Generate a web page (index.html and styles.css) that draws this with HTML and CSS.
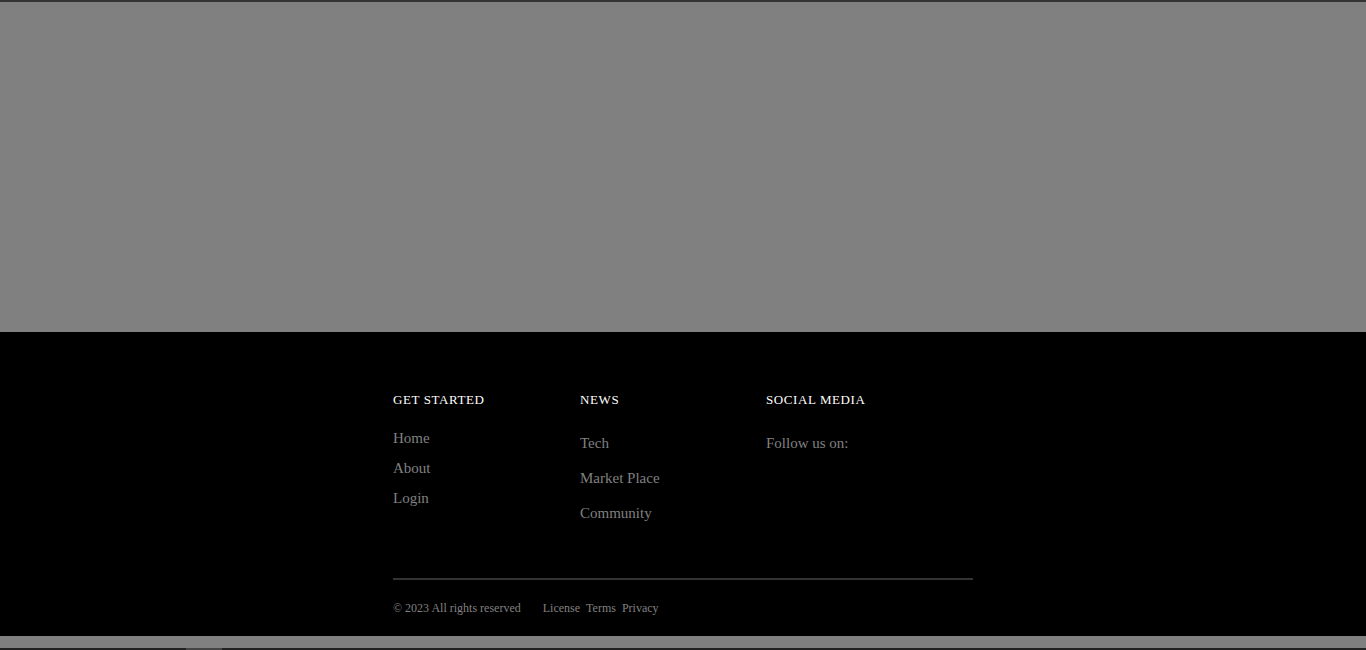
FILE: index.html
```html
<!DOCTYPE html>
<html lang="en">
<head>
    <meta charset="UTF-8">
    <meta name="viewport" content="width=device-width, initial-scale=1.0">
    <title>Footer</title>
    <link rel="stylesheet" href="styles.css">
</head>
<body>
    <div class="hero"></div>

    <footer class="footer">
        <div class="footer-inner">
            <div class="footer-cols">
                <div class="footer-col">
                    <h4>Get Started</h4>
                    <ul class="links links-tight">
                        <li><a href="#">Home</a></li>
                        <li><a href="#">About</a></li>
                        <li><a href="#">Login</a></li>
                    </ul>
                </div>
                <div class="footer-col">
                    <h4>News</h4>
                    <ul class="links">
                        <li><a href="#">Tech</a></li>
                        <li><a href="#">Market Place</a></li>
                        <li><a href="#">Community</a></li>
                    </ul>
                </div>
                <div class="footer-col">
                    <h4>Social Media</h4>
                    <ul class="links">
                        <li>Follow us on:</li>
                    </ul>
                </div>
            </div>

            <div class="footer-bottom">
                <span class="copy">&copy; 2023 All rights reserved</span>
                <div class="legal">
                    <a href="#">License</a>
                    <a href="#">Terms</a>
                    <a href="#">Privacy</a>
                </div>
            </div>
        </div>
    </footer>

    <div class="scrollbar"><div class="thumb"></div></div>
</body>
</html>
```

FILE: styles.css
```css
body {
    margin: 0;
    background-color: #808080;
    border-top: 2px solid #333;
    font-family: "Liberation Serif", "DejaVu Serif", serif;
}
.hero {
    height: 330px;
}
.footer {
    background-color: #000;
    padding: 60px 0 0;
    height: 244px;
}
.footer-inner {
    width: 580px;
    margin: 0 auto;
}
.footer-cols {
    display: grid;
    grid-template-columns: 187px 186px 1fr;
}
.footer-col h4 {
    margin: 0;
    color: #fff;
    font-size: 13px;
    font-weight: normal;
    letter-spacing: 0.6px;
    text-transform: uppercase;
    line-height: 15px;
}
.links {
    list-style: none;
    margin: 19px 0 0;
    padding: 0;
    color: #808080;
    font-size: 15px;
    line-height: 35px;
}
.links-tight {
    margin-top: 16px;
    line-height: 30px;
}
.links a {
    color: #808080;
    text-decoration: none;
}
.footer-bottom {
    margin-top: 47px;
    border-top: 2px solid #333;
    padding-top: 21px;
    display: flex;
    gap: 22px;
    font-size: 12px;
    color: #808080;
}
.legal {
    display: flex;
    gap: 6px;
}
.legal a {
    color: #808080;
    text-decoration: none;
}
.scrollbar {
    height: 12px;
    background-color: #808080;
    border-bottom: 2px solid #222;
    position: relative;
}
.thumb {
    position: absolute;
    left: 186px;
    bottom: -2px;
    width: 36px;
    height: 2px;
    background-color: #444;
}
```
